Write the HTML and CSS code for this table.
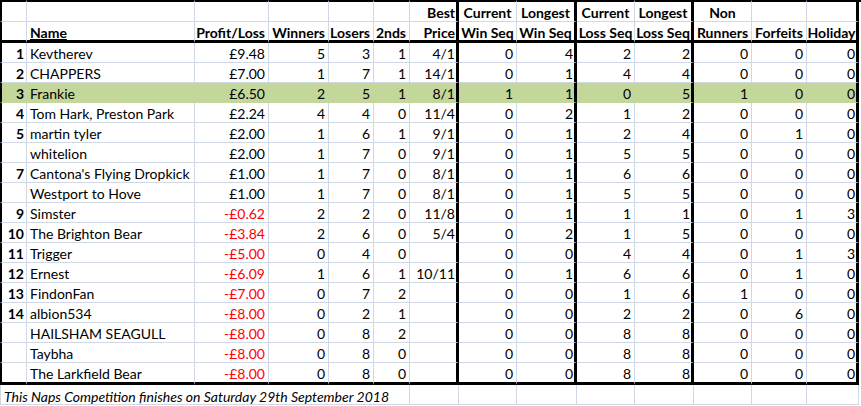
FILE: index.html
```html
<!DOCTYPE html>
<html>
<head>
<meta charset="utf-8">
<link rel="stylesheet" href="styles.css">
</head>
<body>
<div class="sheet">
  <div class="row h1">
    <div class="c first"></div><div class="c"></div><div class="c"></div><div class="c"></div><div class="c"></div><div class="c"></div>
    <div class="c t r b">Best</div>
    <div class="c m b">Current</div>
    <div class="c t m b">Longest</div>
    <div class="c m b">Current</div>
    <div class="c t m b">Longest</div>
    <div class="c m b">Non</div>
    <div class="c"></div>
    <div class="c t"></div>
  </div>
  <div class="row h2">
    <div class="c first"></div>
    <div class="c l b u"><span>Name</span></div>
    <div class="c r b">Profit/Loss</div>
    <div class="c r b">Winners</div>
    <div class="c r b">Losers</div>
    <div class="c r b">2nds</div>
    <div class="c t r b">Price</div>
    <div class="c m b">Win Seq</div>
    <div class="c t m b">Win Seq</div>
    <div class="c m b">Loss Seq</div>
    <div class="c t m b">Loss Seq</div>
    <div class="c m b">Runners</div>
    <div class="c m b">Forfeits</div>
    <div class="c t m b">Holiday</div>
  </div>
</div>
<div class="sheet" id="body"></div>
<script src="app.js"></script>
</body>
</html>
```
FILE: app.js
```js
const rows = [
  ["1","Kevtherev","£9.48","5","3","1","4/1","0","4","2","2","0","0","0"],
  ["2","CHAPPERS","£7.00","1","7","1","14/1","0","1","4","4","0","0","0"],
  ["3","Frankie","£6.50","2","5","1","8/1","1","1","0","5","1","0","0"],
  ["4","Tom Hark, Preston Park","£2.24","4","4","0","11/4","0","2","1","2","0","0","0"],
  ["5","martin tyler","£2.00","1","6","1","9/1","0","1","2","4","0","1","0"],
  ["","whitelion","£2.00","1","7","0","9/1","0","1","5","5","0","0","0"],
  ["7","Cantona's Flying Dropkick","£1.00","1","7","0","8/1","0","1","6","6","0","0","0"],
  ["","Westport to Hove","£1.00","1","7","0","8/1","0","1","5","5","0","0","0"],
  ["9","Simster","-£0.62","2","2","0","11/8","0","1","1","1","0","1","3"],
  ["10","The Brighton Bear","-£3.84","2","6","0","5/4","0","2","1","5","0","0","0"],
  ["11","Trigger","-£5.00","0","4","0","","0","0","4","4","0","1","3"],
  ["12","Ernest","-£6.09","1","6","1","10/11","0","1","6","6","0","1","0"],
  ["13","FindonFan","-£7.00","0","7","2","","0","0","1","6","1","0","0"],
  ["14","albion534","-£8.00","0","2","1","","0","0","2","2","0","6","0"],
  ["","HAILSHAM SEAGULL","-£8.00","0","8","2","","0","0","8","8","0","0","0"],
  ["","Taybha","-£8.00","0","8","0","","0","0","8","8","0","0","0"],
  ["","The Larkfield Bear","-£8.00","0","8","0","","0","0","8","8","0","0","0"]
];
const thick = new Set([6, 8, 10, 13]);
const body = document.getElementById("body");
rows.forEach((r, i) => {
  const row = document.createElement("div");
  row.className = "row data" + (i === 2 ? " hl" : "") + (i === rows.length - 1 ? " last" : "");
  r.forEach((v, j) => {
    const c = document.createElement("div");
    let cls = "c";
    if (j === 0) cls += " first b r";
    else if (j === 1) cls += " l";
    else cls += " r";
    if (thick.has(j)) cls += " t";
    if (j === 2 && v.startsWith("-")) cls += " neg";
    c.className = cls;
    c.textContent = v;
    row.appendChild(c);
  });
  body.appendChild(row);
});
const foot = document.createElement("div");
foot.className = "row foot";
const fc = document.createElement("div");
fc.className = "c note";
fc.textContent = "This Naps Competition finishes on Saturday 29th September 2018";
foot.appendChild(fc);
for (let j = 6; j < 14; j++) {
  const c = document.createElement("div");
  c.className = "c";
  foot.appendChild(c);
}
body.appendChild(foot);
```
FILE: styles.css
```css
html, body {
  margin: 0;
  padding: 0;
  background: #fff;
}
body {
  font-family: Lato, "Liberation Sans", sans-serif;
  font-size: 14px;
  color: #000;
}
.sheet {
  display: flex;
  flex-direction: column;
  width: 861px;
}
.row {
  display: grid;
  grid-template-columns: 27px 168px 74px 60px 45px 36px 49px 58px 60px 58px 59px 58px 55px 52px 2px;
}
.c {
  box-sizing: border-box;
  height: 20px;
  border-right: 1px solid #d0d7e5;
  border-bottom: 1px solid #d0d7e5;
  line-height: 17px;
  padding-top: 2px;
  white-space: nowrap;
  overflow: visible;
  display: flex;
  align-items: center;
}
.c.first {
  border-left: 2px solid #000;
}
.c.t {
  border-right: 3px solid #000;
}
.r { justify-content: flex-end; padding-right: 3px; }
.first.r { padding-right: 2px; }
.t.r { padding-right: 1px; }
.l { padding-left: 3px; }
.m { justify-content: center; }
.b { font-weight: bold; }
.u span { text-decoration: underline; }
.neg { color: #ff0000; }

.h1 .c {
  height: 22px;
  padding-top: 0;
  border-top: 2px solid #000;
  align-items: flex-end;
  line-height: 17px;
}
.h2 .c {
  height: 21px;
  padding-top: 0;
  border-bottom: 3px solid #000;
  align-items: flex-end;
  line-height: 15px;
}
.h1::after { content: ""; border-top: 2px solid #000; }
.h2::after { content: ""; }
.data::after { content: ""; }

.hl .c {
  background: #c4d79b;
  border-bottom-color: #c4d79b;
  border-right-color: #c4d79b;
}
.hl .c.t { border-right-color: #000; }
.last .c {
  height: 22px;
  border-bottom: 3px solid #000;
}
.foot .note {
  grid-column: 1 / 7;
  font-style: italic;
  padding-left: 3px;
  padding-top: 3px;
  border-left: 1px solid #d0d7e5;
}
.foot .c { border-right-color: #d0d7e5; }
```
